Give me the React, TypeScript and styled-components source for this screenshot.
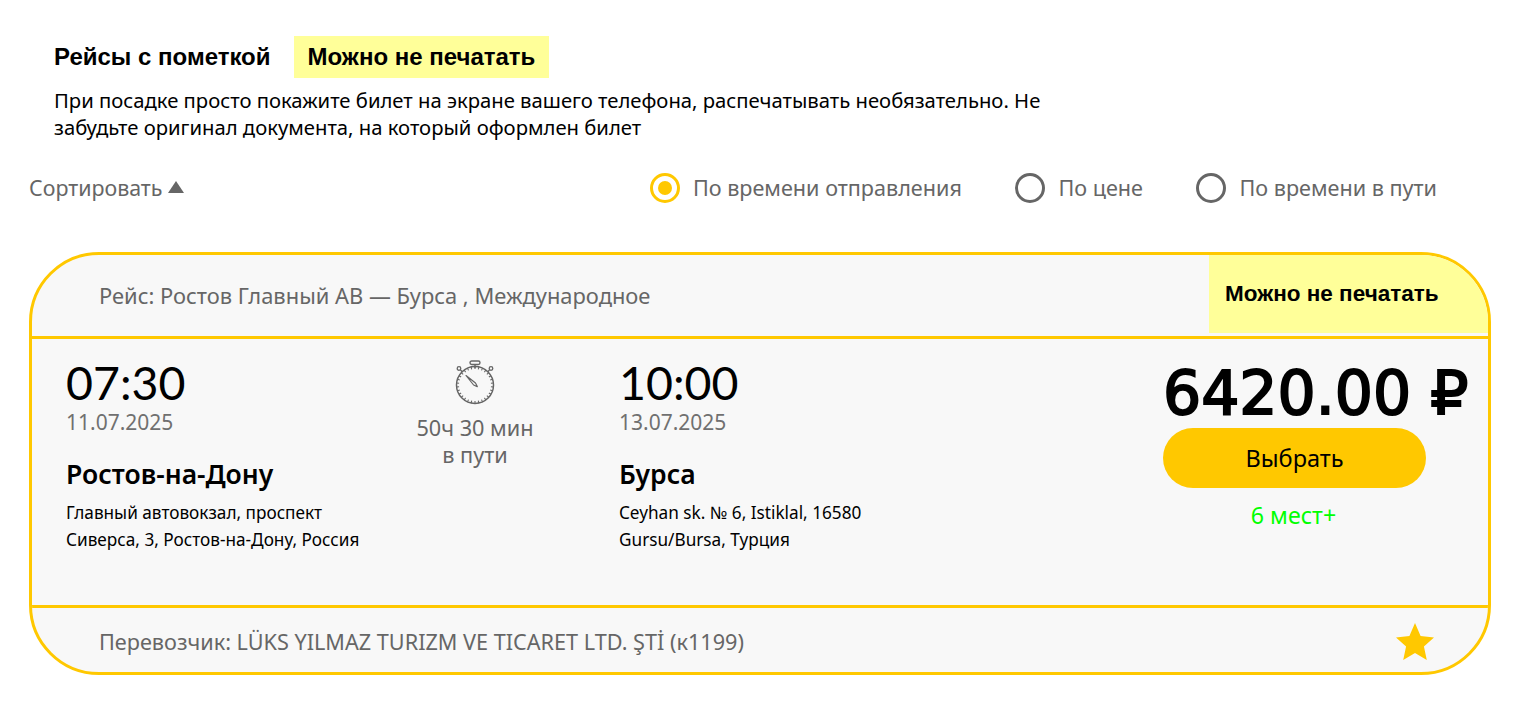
import React from "react";
import styled, { createGlobalStyle } from "styled-components";

const GlobalStyle = createGlobalStyle`
  html, body {
    margin: 0;
    padding: 0;
    background: #fff;
    font-family: "Noto Sans", "Open Sans", sans-serif;
    color: #000;
  }
`;

const Page = styled.div`
  width: 1520px;
  height: 728px;
  overflow: hidden;
  box-sizing: border-box;
  padding: 36px 29px 0;
`;

const Notice = styled.section`
  padding-left: 25px;
`;

const NoticeTitle = styled.div`
  display: flex;
  align-items: center;
  gap: 23px;
  font-family: "Liberation Sans", Arial, sans-serif;
  font-weight: 700;
  font-size: 24px;
`;

const Tag = styled.span`
  display: flex;
  align-items: center;
  height: 42px;
  padding: 0 14px;
  background: #ffff99;
`;

const NoticeText = styled.p`
  width: 1000px;
  margin: 9px 0 0;
  font-size: 20.26px;
  line-height: 27px;
`;

const SortBar = styled.div`
  display: flex;
  align-items: center;
  justify-content: space-between;
  height: 40px;
  margin-top: 26px;
  padding-right: 54px;
  color: #666;
  font-size: 21.6px;
`;

const SortLabel = styled.div`
  display: flex;
  align-items: center;
  gap: 6px;
  font-size: 21.4px;
`;

const Caret = styled.span`
  width: 0;
  height: 0;
  border-left: 8px solid transparent;
  border-right: 8px solid transparent;
  border-bottom: 12px solid #666;
`;

const RadioGroup = styled.div`
  display: flex;
  align-items: center;
  gap: 53.5px;
`;

const RadioOption = styled.label`
  display: flex;
  align-items: center;
  gap: 13px;
`;

const RadioMark = styled.span<{ $active?: boolean }>`
  position: relative;
  width: 30px;
  height: 30px;
  margin-top: 1px;
  box-sizing: border-box;
  border-radius: 50%;
  border: 3px solid ${(p) => (p.$active ? "#ffc800" : "#666")};

  &::after {
    content: "";
    display: ${(p) => (p.$active ? "block" : "none")};
    position: absolute;
    inset: 5px;
    border-radius: 50%;
    background: #ffc800;
  }
`;

const Card = styled.article`
  display: flex;
  flex-direction: column;
  width: 1462px;
  height: 423px;
  box-sizing: border-box;
  margin-top: 45px;
  border: 3px solid #ffc800;
  border-radius: 70px;
  background: #f8f8f8;
  overflow: hidden;
`;

const CardHeader = styled.header`
  display: flex;
  justify-content: space-between;
  height: 81px;
  padding-left: 67px;
  color: #666;
  font-size: 21.9px;
`;

const RouteName = styled.div`
  display: flex;
  align-items: center;
`;

const HeaderTag = styled.div`
  display: flex;
  align-items: center;
  width: 279px;
  height: 78px;
  box-sizing: border-box;
  padding-left: 16px;
  background: #ffff99;
  color: #000;
  font-family: "Liberation Sans", Arial, sans-serif;
  font-weight: 700;
  font-size: 22.5px;
`;

const CardBody = styled.div`
  display: grid;
  grid-template-columns: 320px 178px 1fr 304px;
  height: 272px;
  box-sizing: border-box;
  padding: 19px 21px 0 34px;
  border-top: 3px solid #ffc800;
  border-bottom: 3px solid #ffc800;
`;

const Stop = styled.div<{ $shift?: number }>`
  padding-left: ${(p) => p.$shift ?? 0}px;
`;

const Time = styled.div`
  font-family: "Lato", "Noto Sans", sans-serif;
  font-size: 46.5px;
  line-height: 48px;
  height: 48px;
`;

const DateText = styled.div`
  margin-top: 4px;
  color: #707070;
  font-size: 21px;
  line-height: 24px;
`;

const City = styled.div`
  margin-top: 23px;
  font-size: 26.5px;
  font-weight: 600;
  line-height: 34px;
`;

const Address = styled.div`
  margin-top: 8px;
  font-size: 17.2px;
  line-height: 27px;
`;

const Duration = styled.div`
  display: flex;
  flex-direction: column;
  align-items: center;
  padding-top: 2px;
  color: #666;
  font-size: 21.7px;
  line-height: 27px;
`;

const Watch = styled.svg`
  display: block;
  margin-bottom: 8px;
`;

const PriceColumn = styled.div`
  display: flex;
  flex-direction: column;
  align-items: flex-start;
`;

const Price = styled.div`
  font-family: "DejaVu Sans", "Noto Sans", sans-serif;
  font-size: 60px;
  -webkit-text-stroke: 2px #000;
  line-height: 70px;
  white-space: nowrap;
`;

const ChooseButton = styled.button`
  width: 263px;
  height: 60px;
  border: none;
  border-radius: 30px;
  background: #ffc800;
  color: #000;
  font: inherit;
  font-size: 23.5px;
`;

const Seats = styled.div`
  width: 261px;
  margin-top: 12px;
  color: #00ff00;
  font-size: 23.2px;
  line-height: 30px;
  text-align: center;
`;

const CardFooter = styled.footer`
  display: flex;
  align-items: center;
  justify-content: space-between;
  flex: 1;
  padding: 2px 54px 0 67px;
  color: #666;
  font-size: 21.65px;
`;

function Stopwatch() {
  const ticks = Array.from({ length: 30 }, (_, i) => (i * 360) / 30);
  return (
    <Watch width="42" height="46" viewBox="0 0 42 46" fill="none" stroke="#666">
      <rect x="16" y="1" width="10" height="3.5" rx="1.7" strokeWidth="1.4" />
      <path d="M21 4.5V8M6.5 10l2 2M35.5 10l-2 2" strokeWidth="1.4" />
      <circle cx="5" cy="8.5" r="1.8" strokeWidth="1.3" />
      <circle cx="37" cy="8.5" r="1.8" strokeWidth="1.3" />
      <circle cx="21" cy="25" r="18.5" strokeWidth="1.5" />
      {ticks.map((angle) => (
        <line key={angle} x1="21" y1="6.5" x2="21" y2="9" strokeWidth="1.1" transform={`rotate(${angle} 21 25)`} />
      ))}
      <path d="M12 15.5l9.5 7.5 1.8 3.6-3.7-1.6z" strokeWidth="1.2" strokeLinejoin="round" />
    </Watch>
  );
}

function Star() {
  return (
    <svg width="38" height="37" viewBox="0 0 40 38" preserveAspectRatio="none">
      <path d="M20 0l5.9 13.4L40 14.8 29.4 24.2 32.4 38 20 30.8 7.6 38l3-13.8L0 14.8l14.1-1.4z" fill="#ffc800" />
    </svg>
  );
}

export default function App() {
  return (
    <Page>
      <GlobalStyle />
      <Notice>
        <NoticeTitle>
          Рейсы с пометкой
          <Tag>Можно не печатать</Tag>
        </NoticeTitle>
        <NoticeText>
          При посадке просто покажите билет на экране вашего телефона, распечатывать необязательно. Не забудьте оригинал документа, на который оформлен билет
        </NoticeText>
      </Notice>

      <SortBar>
        <SortLabel>
          Сортировать
          <Caret />
        </SortLabel>
        <RadioGroup>
          <RadioOption>
            <RadioMark $active />
            По времени отправления
          </RadioOption>
          <RadioOption>
            <RadioMark />
            По цене
          </RadioOption>
          <RadioOption>
            <RadioMark />
            По времени в пути
          </RadioOption>
        </RadioGroup>
      </SortBar>

      <Card>
        <CardHeader>
          <RouteName>Рейс: Ростов Главный АВ — Бурса , Международное</RouteName>
          <HeaderTag>Можно не печатать</HeaderTag>
        </CardHeader>
        <CardBody>
          <Stop>
            <Time>07:30</Time>
            <DateText>11.07.2025</DateText>
            <City>Ростов-на-Дону</City>
            <Address>
              Главный автовокзал, проспект
              <br />
              Сиверса, 3, Ростов-на-Дону, Россия
            </Address>
          </Stop>
          <Duration>
            <Stopwatch />
            <span>50ч 30 мин</span>
            <span>в пути</span>
          </Duration>
          <Stop $shift={55}>
            <Time>10:00</Time>
            <DateText>13.07.2025</DateText>
            <City>Бурса</City>
            <Address>
              Ceyhan sk. № 6, Istiklal, 16580
              <br />
              Gursu/Bursa, Турция
            </Address>
          </Stop>
          <PriceColumn>
            <Price>6420.00 ₽</Price>
            <ChooseButton>Выбрать</ChooseButton>
            <Seats>6 мест+</Seats>
          </PriceColumn>
        </CardBody>
        <CardFooter>
          <span>Перевозчик: LÜKS YILMAZ TURIZM VE TICARET LTD. ŞTİ (к1199)</span>
          <Star />
        </CardFooter>
      </Card>
    </Page>
  );
}
